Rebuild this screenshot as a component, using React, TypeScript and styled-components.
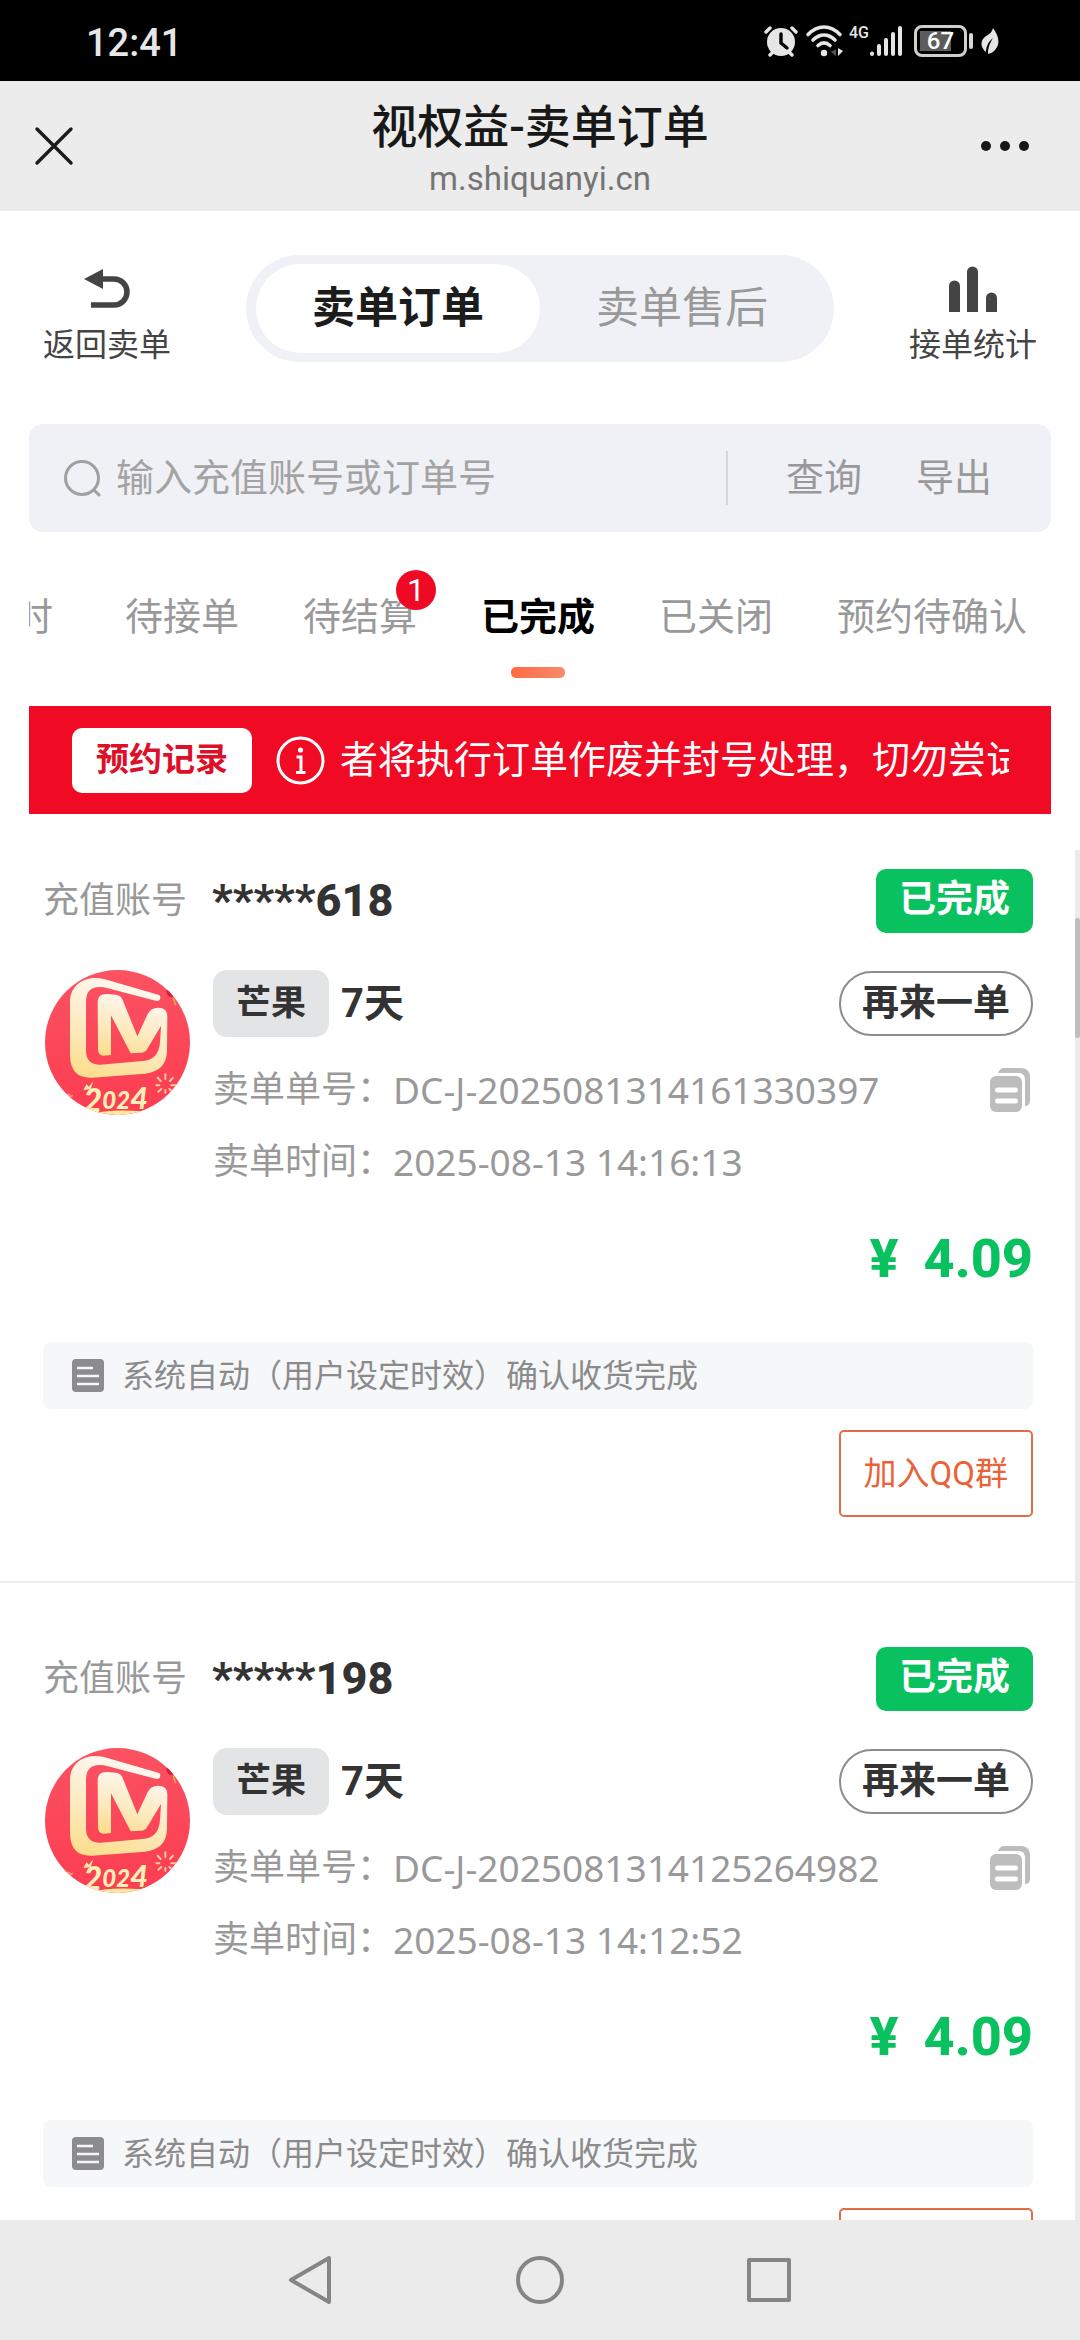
import React, { useState } from "react";
import styled, { createGlobalStyle } from "styled-components";

const GlobalStyle = createGlobalStyle`
  *, *::before, *::after { box-sizing: border-box; }
  body {
    margin: 0;
    background: #fff;
    color: #333;
    font-family: Roboto, "Noto Sans CJK SC", sans-serif;
  }
  button, input { font: inherit; color: inherit; border: 0; margin: 0; padding: 0; background: none; }
  button { cursor: pointer; white-space: nowrap; }
  svg { display: block; flex: none; }
  h1, p, dl, dt, dd { margin: 0; font-weight: inherit; }
`;

const Screen = styled.div`
  display: flex;
  flex-direction: column;
  height: 100vh;
  overflow: hidden;
  background: #fff;
`;

const StatusBar = styled.div`
  display: flex;
  flex: none;
  align-items: center;
  justify-content: space-between;
  height: 81px;
  padding: 0 81px 0 86px;
  background: #000;
  color: #e6e6e6;
`;

const Clock = styled.time`
  font-size: 38px;
  line-height: 40px;
  font-weight: 500;
  padding-top: 5px;
`;

const StatusIcons = styled.div`
  display: flex;
  align-items: center;
  height: 32px;
`;

const Network = styled.span`
  align-self: flex-start;
  margin-left: 5px;
  font-size: 16px;
  line-height: 16px;
  font-weight: 500;
`;

const Battery = styled.span`
  display: flex;
  align-items: center;
  justify-content: center;
  width: 53px;
  height: 32px;
  margin-left: 11px;
  border: 3px solid #cfcfcf;
  border-radius: 8px;
  background: linear-gradient(90deg, #5c5c5c 31px, transparent 31px) 3px 3px / 36px 20px no-repeat;
  color: #fff;
  font-size: 24px;
  line-height: 26px;
  font-weight: 500;
`;

const BatteryCap = styled.span`
  width: 4px;
  height: 16px;
  margin: 0 8px 0 2px;
  border-radius: 2px;
  background: #d8d8d8;
`;

const TitleBar = styled.header`
  display: grid;
  flex: none;
  grid-template-columns: 1fr auto 1fr;
  align-items: center;
  height: 130px;
  padding: 0 46px 0 32px;
  background: #ececec;
  color: #181818;
  & > :first-child { justify-self: start; }
  & > :last-child { justify-self: end; }
`;

const IconButton = styled.button`
  display: flex;
  align-items: center;
  justify-content: center;
`;

const TitleText = styled.div`
  display: flex;
  flex-direction: column;
  align-items: center;
  padding: 6px 0 0 14px;
`;

const PageTitle = styled.h1`
  font-size: 46px;
  line-height: 56px;
  font-weight: 500;
`;

const PageHost = styled.p`
  font-size: 33px;
  line-height: 40px;
  color: #757575;
  padding-top: 4px;
`;

const Toolbar = styled.nav`
  display: flex;
  flex: none;
  align-items: center;
  justify-content: space-between;
  padding: 40px 43px 59px;
`;

const ToolLink = styled.a`
  display: flex;
  flex-direction: column;
  align-items: center;
  gap: 12px;
  padding-top: 14px;
  color: #444;
  font-size: 32px;
  line-height: 40px;
  text-decoration: none;
`;

const Segment = styled.div`
  display: flex;
  padding: 9px 10px;
  border-radius: 54px;
  background: #f0f1f7;
`;

const SegmentButton = styled.button<{ $active: boolean }>`
  width: 284px;
  height: 89px;
  border-radius: 45px;
  background: ${(p) => (p.$active ? "#fff" : "transparent")};
  color: ${(p) => (p.$active ? "#1c1c1c" : "#999")};
  font-size: 43px;
  line-height: 60px;
  font-weight: ${(p) => (p.$active ? 700 : 400)};
`;

const SearchBar = styled.form`
  display: flex;
  flex: none;
  align-items: center;
  height: 108px;
  margin: 0 29px;
  padding: 0 59px 0 35px;
  border-radius: 14px;
  background: #f0f1f6;
  color: #999;
  font-size: 38px;
`;

const SearchInput = styled.input`
  flex: 1;
  min-width: 0;
  height: 60px;
  margin-left: 15px;
  outline: 0;
  &::placeholder { color: #a3a3a3; opacity: 1; }
`;

const SearchActions = styled.div`
  display: flex;
  align-items: center;
  gap: 54px;
  height: 54px;
  padding-left: 58px;
  border-left: 2px solid #d4d5da;
  line-height: 50px;
`;

const TabStrip = styled.div`
  display: flex;
  flex: none;
  justify-content: flex-end;
  gap: 64px;
  margin: 0 29px;
  padding: 60px 24px 28px 0;
  overflow: hidden;
`;

const Tab = styled.button<{ $active: boolean }>`
  position: relative;
  display: flex;
  flex: none;
  flex-direction: column;
  align-items: center;
  gap: 25px;
  color: ${(p) => (p.$active ? "#000" : "#999")};
  font-size: 38px;
  line-height: 50px;
  font-weight: ${(p) => (p.$active ? 700 : 400)};
`;

const TabMark = styled.span<{ $active: boolean }>`
  width: 54px;
  height: 11px;
  border-radius: 5px;
  background: ${(p) => (p.$active ? "linear-gradient(100deg, #ff6a42, #f58c6c)" : "transparent")};
`;

const CountBadge = styled.span`
  position: absolute;
  top: -22px;
  right: -19px;
  width: 40px;
  height: 40px;
  border-radius: 50%;
  background: #ee0a24;
  color: #fff;
  font-size: 32px;
  line-height: 40px;
  text-align: center;
`;

const Notice = styled.section`
  display: flex;
  flex: none;
  align-items: center;
  height: 108px;
  margin: 0 29px;
  padding: 0 42px 0 43px;
  background: #f00a24;
  color: #fff;
`;

const NoticeButton = styled.button`
  height: 65px;
  margin-right: 24px;
  padding: 0 24px;
  border-radius: 10px;
  background: #fff;
  color: #dc1029;
  font-size: 33px;
  line-height: 60px;
  font-weight: 700;
`;

const NoticeText = styled.p`
  flex: 1;
  min-width: 0;
  margin-left: 15px;
  overflow: hidden;
  white-space: nowrap;
  font-size: 38px;
  line-height: 54px;
`;

const ListFrame = styled.main`
  position: relative;
  flex: 1;
  min-height: 0;
  margin-top: 36px;
  overflow: hidden;
`;

const ScrollTrack = styled.div`
  position: absolute;
  top: 0;
  right: 0;
  bottom: 0;
  width: 5px;
  padding-top: 68px;
  background: #ebebeb;
`;

const ScrollThumb = styled.div`
  height: 120px;
  border-radius: 2px;
  background: #bfbfbf;
`;

const OrderCard = styled.article`
  display: flex;
  flex-direction: column;
  padding: 64px 47px 64px 43px;
  border-bottom: 2px solid #efefef;
  &:first-child { padding-top: 19px; }
`;

const OrderHead = styled.div`
  display: flex;
  align-items: center;
  height: 64px;
`;

const AccountLabel = styled.span`
  color: #999;
  font-size: 36px;
  line-height: 60px;
`;

const Account = styled.strong`
  flex: 1;
  margin-left: 25px;
  font-size: 45px;
  line-height: 60px;
  font-weight: 800;
`;

const StateBadge = styled.span`
  height: 64px;
  padding: 0 23px;
  border-radius: 10px;
  background: #0ac160;
  color: #fff;
  font-size: 37px;
  line-height: 62px;
  font-weight: 700;
`;

const OrderBody = styled.div`
  display: flex;
  gap: 23px;
  margin-top: 37px;
  padding-left: 2px;
`;

const OrderInfo = styled.div`
  flex: 1;
  min-width: 0;
`;

const ProductRow = styled.div`
  display: flex;
  align-items: center;
  height: 67px;
  margin-bottom: 17px;
`;

const Brand = styled.span`
  padding: 0 23px;
  border-radius: 14px;
  background: #e3e4e6;
  font-size: 35px;
  line-height: 67px;
  font-weight: 700;
`;

const Plan = styled.strong`
  flex: 1;
  margin-left: 12px;
  font-size: 40px;
  line-height: 60px;
`;

const AgainButton = styled.button`
  height: 65px;
  padding: 0 21px;
  border: 2px solid #8c8c8c;
  border-radius: 33px;
  font-size: 37px;
  line-height: 58px;
  font-weight: 700;
`;

const Meta = styled.dl`
  display: flex;
  align-items: center;
  height: 72px;
  color: #999;
  line-height: 50px;
`;

const MetaName = styled.dt`
  font-size: 36px;
`;

const MetaValue = styled.dd`
  flex: 1;
  font-family: "Noto Sans", Roboto, sans-serif;
  font-size: 37px;
`;

const CopyButton = styled(IconButton)`
  margin-right: 2px;
`;

const Price = styled.p`
  display: flex;
  justify-content: flex-end;
  gap: 25px;
  margin-top: 31px;
  color: #0ac160;
  font-size: 54px;
  line-height: 60px;
  font-weight: 800;
`;

const Remark = styled.p`
  display: flex;
  align-items: center;
  gap: 18px;
  height: 67px;
  margin-top: 53px;
  padding: 0 29px;
  border-radius: 8px;
  background: #f6f7f9;
  color: #8b8b8b;
  font-size: 32px;
  line-height: 60px;
`;

const GroupButton = styled.button`
  align-self: flex-end;
  height: 87px;
  margin-top: 21px;
  padding: 0 23px;
  border: 2px solid #e36b45;
  border-radius: 5px;
  color: #ea6238;
  font-size: 33px;
  line-height: 60px;
`;

const SystemNav = styled.footer`
  display: flex;
  flex: none;
  align-items: center;
  justify-content: center;
  gap: 180px;
  height: 120px;
  background: #ebebeb;
`;

const AlarmIcon = () => (
  <svg width="34" height="32" viewBox="0 0 34 32" fill="none" stroke="#e6e6e6" strokeLinecap="round">
    <circle cx="17" cy="17" r="14" fill="#e6e6e6" stroke="none" />
    <path d="M2 7l4-4M32 7l-4-4M6 30l4-4M28 30l-4-4" strokeWidth="3.4" />
    <path d="M17 9v9l6 5" stroke="#000" strokeWidth="3.4" />
  </svg>
);

const WifiIcon = () => (
  <svg width="46" height="32" viewBox="-8 0 46 32" fill="none" stroke="#e6e6e6" strokeWidth="3.6" strokeLinecap="round">
    <path d="M2 9.500C12-.5 24-.5 34 9.500M7 15c7-6.500 15-6.500 22 0M12 20.500c4-3.600 8-3.600 12 0" />
    <circle cx="18" cy="28" r="3.200" fill="#e6e6e6" stroke="none" />
    <path d="M30 24v7l-5-4z" fill="#555" stroke="none" />
    <path d="M32 23v8l5-5z" fill="#e6e6e6" stroke="none" />
  </svg>
);

const SignalIcon = () => (
  <svg width="34" height="32" viewBox="0 0 34 32" stroke="#e6e6e6" strokeWidth="4" strokeLinecap="round">
    <path d="M3 28.500v.5M10 21v8M17 15v14M24 9v20M31 3v26" />
  </svg>
);

const LeafIcon = () => (
  <svg width="18" height="28" viewBox="0 0 18 28">
    <path d="M12 1c6 8 8 17 1 23-2 2-4 2-6 3 0-7 2-11 5-16-5 4-7 9-7 14C-1 20-1 13 5 9c4-2 6-4 7-8z" fill="#e6e6e6" />
  </svg>
);

const CloseIcon = () => (
  <svg width="44" height="44" viewBox="0 0 44 44" stroke="#1c1c1c" strokeWidth="3.400" strokeLinecap="round">
    <path d="M5 5l34 34M39 5L5 39" />
  </svg>
);

const MoreIcon = () => (
  <svg width="58" height="44" viewBox="0 0 58 44" fill="#181818">
    <circle cx="10" cy="22" r="5" />
    <circle cx="29" cy="22" r="5" />
    <circle cx="48" cy="22" r="5" />
  </svg>
);

const ReturnIcon = () => (
  <svg width="48" height="48" viewBox="0 0 48 48">
    <path d="M1 14L20 4v20z" fill="#444" />
    <path d="M18 14h13a13 13 0 0 1 0 26H8" fill="none" stroke="#444" strokeWidth="5.500" />
  </svg>
);

const StatsIcon = () => (
  <svg width="50" height="48" viewBox="0 0 50 48" fill="#444">
    <path d="M1 47V21a5.500 5.500 0 0 1 11 0v26zM19 47V7a5.500 5.500 0 0 1 11 0v40zM38 47V33a5.500 5.500 0 0 1 11 0v14z" />
  </svg>
);

const SearchIcon = () => (
  <svg width="37" height="37" viewBox="0 0 37 37" fill="none" stroke="#a0a0a0" strokeWidth="3" strokeLinecap="round">
    <circle cx="18" cy="18" r="16.500" />
    <path d="M30 30l5 5" />
  </svg>
);

const InfoIcon = () => (
  <svg width="49" height="49" viewBox="0 0 49 49" fill="none" stroke="#fff" strokeWidth="3">
    <circle cx="24.500" cy="24.500" r="22.500" />
    <circle cx="24.500" cy="14" r="2.600" fill="#fff" stroke="none" />
    <path d="M20.500 21h4.500v15M20 36.500h9.500" />
  </svg>
);

const CopyIcon = () => (
  <svg width="42" height="44" viewBox="0 0 42 44">
    <path d="M9 5c1-3 3-5 6-5h17c6 0 9 4 9 9v24c0 3-2 5-5 5V12c0-4-2-7-6-7z" fill="#bdbdbd" />
    <rect x="1" y="8" width="32" height="36" rx="6" fill="#bdbdbd" />
    <path d="M8.500 22h18M8.500 33h18" stroke="#fff" strokeWidth="5" strokeLinecap="round" />
  </svg>
);

const RemarkIcon = () => (
  <svg width="32" height="34" viewBox="0 0 32 34">
    <rect width="32" height="33" rx="4" fill="#8c8c8e" />
    <path d="M5 9h16M5 17h22M5 25h22" stroke="#f6f7f9" strokeWidth="2.600" />
  </svg>
);

const MangoLogo = () => (
  <svg width="145" height="145" viewBox="45 36 435 435" role="img" aria-label="芒果">
    <defs>
      <linearGradient id="mangoRed" x1="0" y1="0" x2="0" y2="1">
        <stop offset="0" stopColor="#fb5262" />
        <stop offset="1" stopColor="#fc3d50" />
      </linearGradient>
      <linearGradient id="mangoGold" x1="0.300" y1="0" x2="0" y2="1">
        <stop offset="0" stopColor="#fff6ee" />
        <stop offset="0.500" stopColor="#fdeac0" />
        <stop offset="1" stopColor="#fbdc85" />
      </linearGradient>
      <clipPath id="mangoClip"><circle cx="262.500" cy="253.500" r="217.500" /></clipPath>
    </defs>
    <g clipPath="url(#mangoClip)">
      <rect x="45" y="36" width="435" height="435" fill="url(#mangoRed)" />
      <path
        d="M385 110L222 63C165 50 120 80 120 132V294Q122 362 186 359L345 347Q409 340 411 280L412 175C411 158 402 150 388 150L375 160C392 160 394 170 394 190L390 252Q386 303 345 308L212 320Q169 321 168 280V130Q169 80 222 88L380 129Q394 128 390 113Z"
        fill="url(#mangoGold)"
      />
      <path
        d="M203 130Q205 106 232 108L258 110Q274 113 278 126L322 235L353 168Q364 148 386 149Q412 153 411 174L352 272Q346 283 333 284L302 286L243 172V291L220 293Q205 291 204 275Z"
        fill="url(#mangoGold)"
      />
      <path d="M408 98q16-8 25 12l-8 8q-14-2-17-20z" fill="#d71f35" />
      <path d="M430 120l7 22" stroke="#f0a04b" strokeWidth="5" />
      <g stroke="#ffc9a6" strokeWidth="6" strokeLinecap="round">
        <path d="M406 363v-14M392 369l-9-10M420 369l9-10M388 382h-9M424 382h14M394 393l-9 8M406 396v8M418 393l8 7" />
      </g>
      <path d="M160 396l10-18 6 8 14-16-8 24z" fill="#ffe9a8" />
      <path d="M112 408l8 4M118 418l10-6" stroke="#ff9b80" strokeWidth="5" />
      <text x="160" y="462" fontFamily="Lato, sans-serif" fontSize="98" fontWeight="900" fontStyle="italic" fill="#fff0b8">
        2<tspan fontSize="72" dy="-8">02</tspan><tspan fontSize="92">4</tspan>
      </text>
      <path d="M176 470q60-18 160-10v14H176z" fill="#ffe9a0" />
    </g>
  </svg>
);

const BackIcon = () => (
  <svg width="48" height="50" viewBox="0 0 48 50" fill="none" stroke="#858585" strokeWidth="4" strokeLinejoin="round">
    <path d="M42 3v44L4 25z" />
  </svg>
);

const HomeIcon = () => (
  <svg width="50" height="50" viewBox="0 0 50 50" fill="none" stroke="#858585" strokeWidth="4">
    <circle cx="25" cy="25" r="22" />
  </svg>
);

const RecentsIcon = () => (
  <svg width="48" height="50" viewBox="0 0 48 50" fill="none" stroke="#858585" strokeWidth="4" strokeLinejoin="round">
    <rect x="4" y="5" width="40" height="40" />
  </svg>
);

const tabs = [
  { label: "时" },
  { label: "待接单" },
  { label: "待结算", count: 1 },
  { label: "已完成" },
  { label: "已关闭" },
  { label: "预约待确认" },
];

interface Order {
  account: string;
  number: string;
  time: string;
  price: string;
}

const orders: Order[] = [
  { account: "*****618", number: "DC-J-2025081314161330397", time: "2025-08-13 14:16:13", price: "4.09" },
  { account: "*****198", number: "DC-J-2025081314125264982", time: "2025-08-13 14:12:52", price: "4.09" },
];

function OrderItem({ order }: { order: Order }) {
  return (
    <OrderCard>
      <OrderHead>
        <AccountLabel>充值账号</AccountLabel>
        <Account>{order.account}</Account>
        <StateBadge>已完成</StateBadge>
      </OrderHead>
      <OrderBody>
        <MangoLogo />
        <OrderInfo>
          <ProductRow>
            <Brand>芒果</Brand>
            <Plan>7天</Plan>
            <AgainButton type="button">再来一单</AgainButton>
          </ProductRow>
          <Meta>
            <MetaName>卖单单号：</MetaName>
            <MetaValue>{order.number}</MetaValue>
            <CopyButton type="button" aria-label="复制"><CopyIcon /></CopyButton>
          </Meta>
          <Meta>
            <MetaName>卖单时间：</MetaName>
            <MetaValue>{order.time}</MetaValue>
          </Meta>
        </OrderInfo>
      </OrderBody>
      <Price><span>¥</span><span>{order.price}</span></Price>
      <Remark><RemarkIcon />系统自动（用户设定时效）确认收货完成</Remark>
      <GroupButton type="button">加入QQ群</GroupButton>
    </OrderCard>
  );
}

export default function App() {
  const [segment, setSegment] = useState("卖单订单");
  const [tab, setTab] = useState("已完成");

  return (
    <>
      <GlobalStyle />
      <Screen>
        <StatusBar>
          <Clock>12:41</Clock>
          <StatusIcons>
            <AlarmIcon />
            <WifiIcon />
            <Network>4G</Network>
            <SignalIcon />
            <Battery>67</Battery>
            <BatteryCap />
            <LeafIcon />
          </StatusIcons>
        </StatusBar>
        <TitleBar>
          <IconButton type="button" aria-label="关闭"><CloseIcon /></IconButton>
          <TitleText>
            <PageTitle>视权益-卖单订单</PageTitle>
            <PageHost>m.shiquanyi.cn</PageHost>
          </TitleText>
          <IconButton type="button" aria-label="更多"><MoreIcon /></IconButton>
        </TitleBar>
        <Toolbar>
          <ToolLink href="#sell"><ReturnIcon />返回卖单</ToolLink>
          <Segment>
            {["卖单订单", "卖单售后"].map((name) => (
              <SegmentButton key={name} type="button" $active={segment === name} onClick={() => setSegment(name)}>
                {name}
              </SegmentButton>
            ))}
          </Segment>
          <ToolLink href="#stats"><StatsIcon />接单统计</ToolLink>
        </Toolbar>
        <SearchBar onSubmit={(e) => e.preventDefault()}>
          <SearchIcon />
          <SearchInput type="text" aria-label="输入充值账号或订单号" placeholder="输入充值账号或订单号" />
          <SearchActions>
            <button type="submit">查询</button>
            <button type="button">导出</button>
          </SearchActions>
        </SearchBar>
        <TabStrip>
          {tabs.map(({ label, count }) => (
            <Tab key={label} type="button" $active={tab === label} onClick={() => setTab(label)}>
              {label}
              <TabMark $active={tab === label} />
              {count && <CountBadge>{count}</CountBadge>}
            </Tab>
          ))}
        </TabStrip>
        <Notice>
          <NoticeButton type="button">预约记录</NoticeButton>
          <InfoIcon />
          <NoticeText>者将执行订单作废并封号处理，切勿尝试</NoticeText>
        </Notice>
        <ListFrame>
          {orders.map((order) => (
            <OrderItem key={order.number} order={order} />
          ))}
          <ScrollTrack><ScrollThumb /></ScrollTrack>
        </ListFrame>
        <SystemNav>
          <IconButton type="button" aria-label="返回"><BackIcon /></IconButton>
          <IconButton type="button" aria-label="主页"><HomeIcon /></IconButton>
          <IconButton type="button" aria-label="最近任务"><RecentsIcon /></IconButton>
        </SystemNav>
      </Screen>
    </>
  );
}
